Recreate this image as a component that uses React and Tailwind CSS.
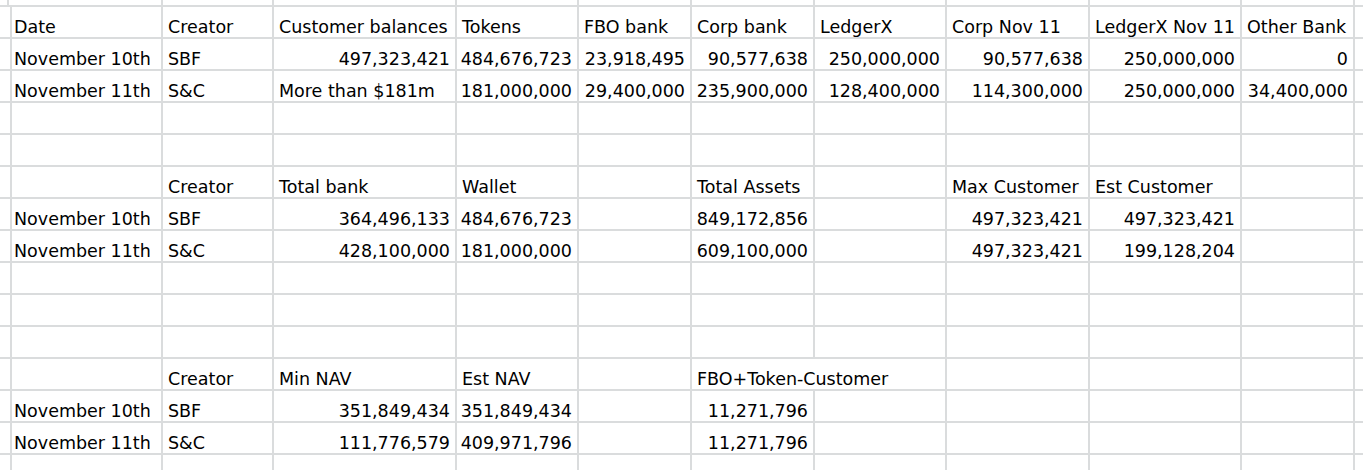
import React from 'react';

// sheet rows, columns B..K (A is the sliver on the left, L the sliver on the right)
const rows = [
    ["Date", "Creator", "Customer balances", "Tokens", "FBO bank", "Corp bank", "LedgerX", "Corp Nov 11", "LedgerX Nov 11", "Other Bank"],
    ["November 10th", "SBF", "497,323,421", "484,676,723", "23,918,495", "90,577,638", "250,000,000", "90,577,638", "250,000,000", "0"],
    ["November 11th", "S&C", "More than $181m", "181,000,000", "29,400,000", "235,900,000", "128,400,000", "114,300,000", "250,000,000", "34,400,000"],
    [],
    [],
    ["", "Creator", "Total bank", "Wallet", "", "Total Assets", "", "Max Customer", "Est Customer", ""],
    ["November 10th", "SBF", "364,496,133", "484,676,723", "", "849,172,856", "", "497,323,421", "497,323,421", ""],
    ["November 11th", "S&C", "428,100,000", "181,000,000", "", "609,100,000", "", "497,323,421", "199,128,204", ""],
    [],
    [],
    [],
    ["", "Creator", "Min NAV", "Est NAV", "", { t: "FBO+Token-Customer", span: 2 }, "", "", ""],
    ["November 10th", "SBF", "351,849,434", "351,849,434", "", "11,271,796", "", "", "", ""],
    ["November 11th", "S&C", "111,776,579", "409,971,796", "", "11,271,796", "", "", "", ""],
    [],
];

const isNum = (s) => /^[\d,]+$/.test(s);

const Cell = ({ text, span }) => {
    const right = isNum(text);
    return (
        <div className={`border-r-2 border-b-2 border-[#dadcdd] flex items-end px-[5px] whitespace-nowrap overflow-hidden leading-[20px] ${right ? "justify-end" : "justify-start"} ${span === 2 ? "col-span-2" : ""}`}>
            {text}
        </div>
    );
};

const App = () => {
    const cells = [];
    // top sliver row
    for (let c = 0; c < 12; c++) {
        cells.push(<div key={`top-${c}`} className="border-r-2 border-b-2 border-[#dadcdd]" />);
    }
    rows.forEach((row, r) => {
        cells.push(<Cell key={`${r}-a`} text="" />);
        let c = 0;
        let i = 0;
        while (c < 10) {
            const item = row[i];
            i++;
            if (item && typeof item === "object") {
                cells.push(<Cell key={`${r}-${c}`} text={item.t} span={item.span} />);
                c += item.span;
            } else {
                cells.push(<Cell key={`${r}-${c}`} text={item || ""} />);
                c++;
            }
        }
        cells.push(<Cell key={`${r}-l`} text="" />);
    });

    return (
        <div className="w-[1363px] h-[470px] overflow-hidden bg-white text-black text-[17.5px] font-['DejaVu_Sans',sans-serif]">
            <div className="grid grid-cols-[9px_154px_111px_183px_122px_113px_123px_132px_143px_152px_113px_120px] grid-rows-[7px] auto-rows-[32px]">
                {cells}
            </div>
        </div>
    );
};

export default App;
